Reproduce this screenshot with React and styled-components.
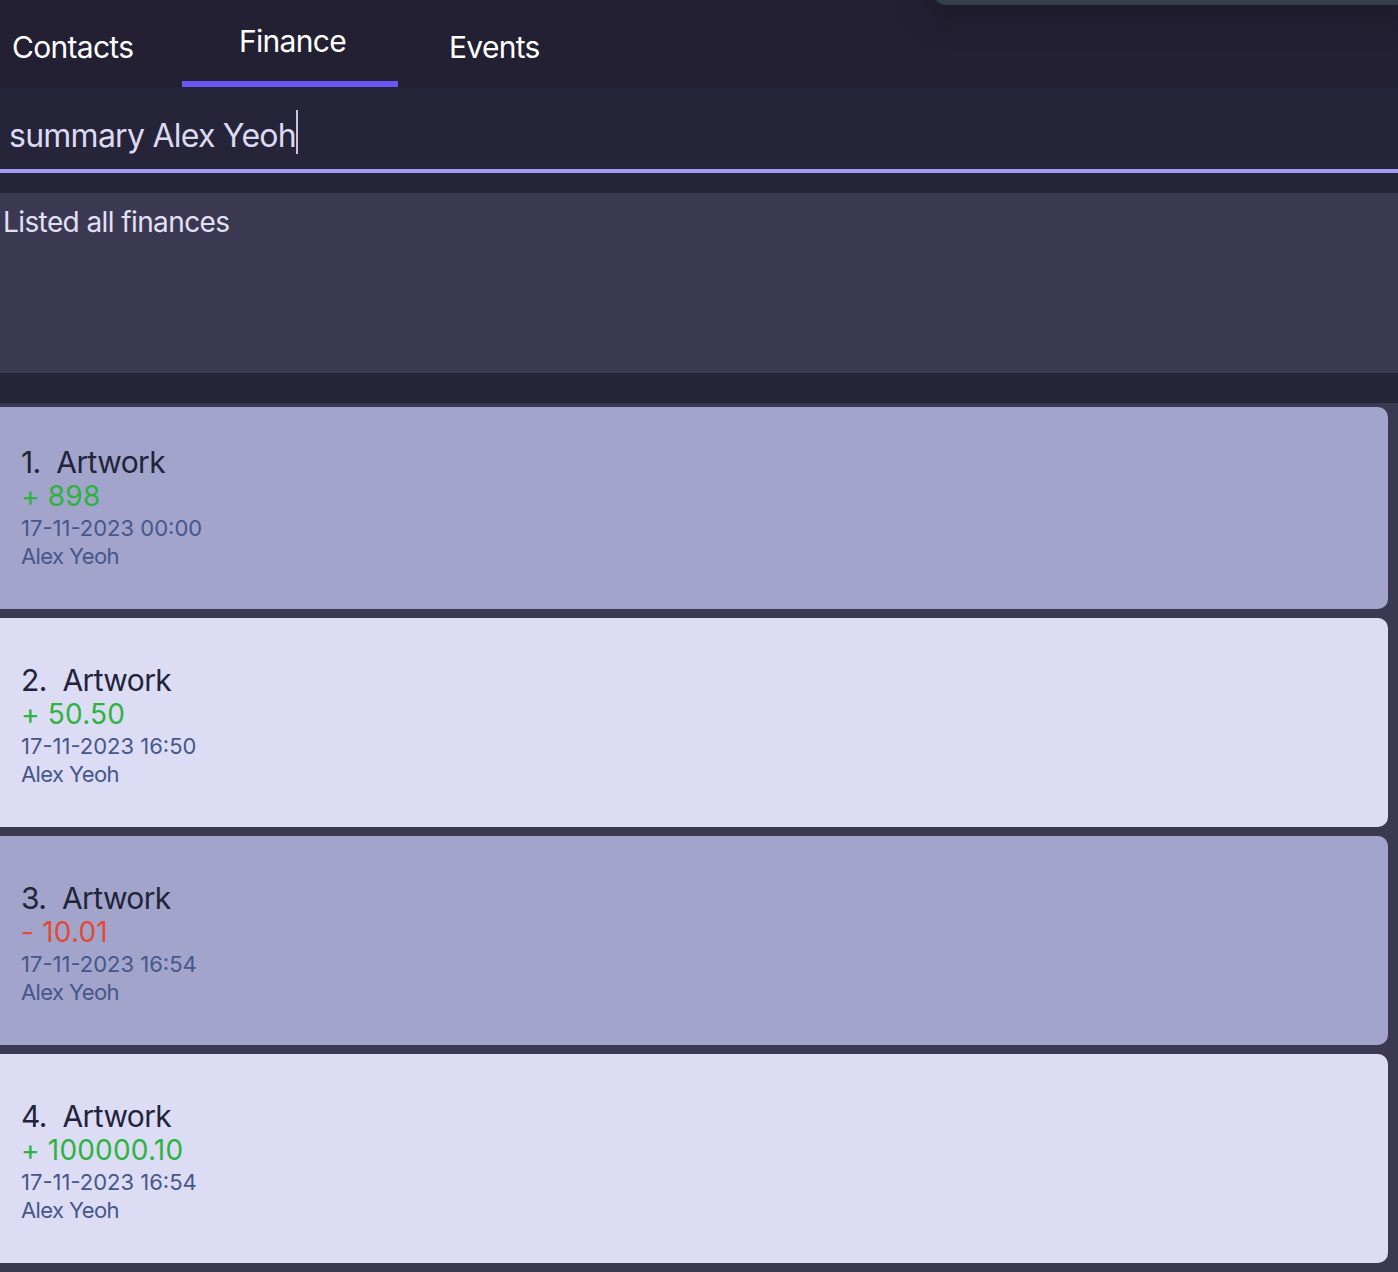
import React from 'react';
import styled, { createGlobalStyle } from 'styled-components';

const GlobalStyle = createGlobalStyle`
    html, body {
        margin: 0;
        padding: 0;
        background: #262438;
    }
    body {
        font-family: Inter, "Noto Sans", sans-serif;
    }
`;

const Page = styled.div`
    position: relative;
    width: 1398px;
    height: 1272px;
    overflow: hidden;
    display: flex;
    flex-direction: column;
    background: #262438;
`;

const Overlay = styled.div`
    position: absolute;
    top: -20px;
    left: 935px;
    right: 0;
    height: 25px;
    background: #333f4b;
    border-bottom-left-radius: 10px;
    box-shadow: 0 4px 30px 8px rgba(20, 18, 30, 0.45);
`;

const TabBar = styled.div`
    display: flex;
    height: 87px;
    flex-shrink: 0;
    background: #232033;
`;

const Tab = styled.div`
    box-sizing: border-box;
    width: ${(p) => p.$width}px;
    padding-left: ${(p) => p.$pad}px;
    padding-top: ${(p) => (p.$active ? 23 : 29)}px;
    font-size: 30px;
    color: #ffffff;
    letter-spacing: -0.7px;
    border-bottom: 6px solid ${(p) => (p.$active ? '#6b55f5' : 'transparent')};
`;

const CommandBox = styled.div`
    height: 86px;
    flex-shrink: 0;
    box-sizing: border-box;
    padding: 29px 0 0 9px;
    background: #262438;
    border-bottom: 4px solid #a798f5;
    font-size: 32px;
    color: #dcdaf2;
    letter-spacing: -0.75px;
    display: flex;
    align-items: flex-start;
`;

const Caret = styled.span`
    display: inline-block;
    width: 2px;
    height: 44px;
    margin-top: -6px;
    background: #c9c6e4;
`;

const Spacer = styled.div`
    height: ${(p) => p.$h}px;
    flex-shrink: 0;
    background: #262438;
`;

const ResultBox = styled.div`
    height: 180px;
    flex-shrink: 0;
    box-sizing: border-box;
    padding: 12px 0 0 3px;
    background: #3b3852;
    font-size: 28px;
    color: #e2e0f4;
    letter-spacing: -0.6px;
`;

const List = styled.div`
    flex: 1;
    display: flex;
    flex-direction: column;
    gap: 9px;
    padding: 4px 10px 0 0;
    background: #3b3852;
`;

const Card = styled.div`
    box-sizing: border-box;
    height: ${(p) => (p.$clipped ? 202 : 209)}px;
    flex-shrink: 0;
    padding: ${(p) => (p.$clipped ? 38 : 45)}px 0 0 21px;
    background: ${(p) => (p.$odd ? '#a2a4cb' : '#dddcf5')};
    border-top-right-radius: 10px;
    border-bottom-right-radius: 10px;
`;

const Title = styled.div`
    font-size: 30px;
    line-height: 34px;
    color: #21243a;
    letter-spacing: -0.6px;
    white-space: pre;
`;

const Amount = styled.div`
    font-size: 28px;
    line-height: 35px;
    color: ${(p) => (p.$negative ? '#e04b35' : '#2db33f')};
    letter-spacing: 0.2px;
`;

const Meta = styled.div`
    font-size: 22px;
    line-height: 28px;
    color: #46578a;
    letter-spacing: 0px;
`;

const Owner = styled(Meta)`
    letter-spacing: -0.6px;
`;

const finances = [
    { id: 1, amount: '+ 898', date: '17-11-2023 00:00' },
    { id: 2, amount: '+ 50.50', date: '17-11-2023 16:50' },
    { id: 3, amount: '- 10.01', date: '17-11-2023 16:54', negative: true },
    { id: 4, amount: '+ 100000.10', date: '17-11-2023 16:54' },
];

export default function App() {
    return (
        <Page>
            <GlobalStyle />
            <TabBar>
                <Tab $width={182} $pad={12}>Contacts</Tab>
                <Tab $width={216} $pad={57} $active>Finance</Tab>
                <Tab $width={200} $pad={51}>Events</Tab>
            </TabBar>
            <CommandBox>
                summary Alex Yeoh<Caret />
            </CommandBox>
            <Spacer $h={20} />
            <ResultBox>Listed all finances</ResultBox>
            <Spacer $h={30} />
            <List>
                {finances.map((f, i) => (
                    <Card key={f.id} $odd={i % 2 === 0} $clipped={i === 0}>
                        <Title>{`${f.id}.  Artwork`}</Title>
                        <Amount $negative={f.negative}>{f.amount}</Amount>
                        <Meta>{f.date}</Meta>
                        <Owner>Alex Yeoh</Owner>
                    </Card>
                ))}
            </List>
            <Overlay />
        </Page>
    );
}
